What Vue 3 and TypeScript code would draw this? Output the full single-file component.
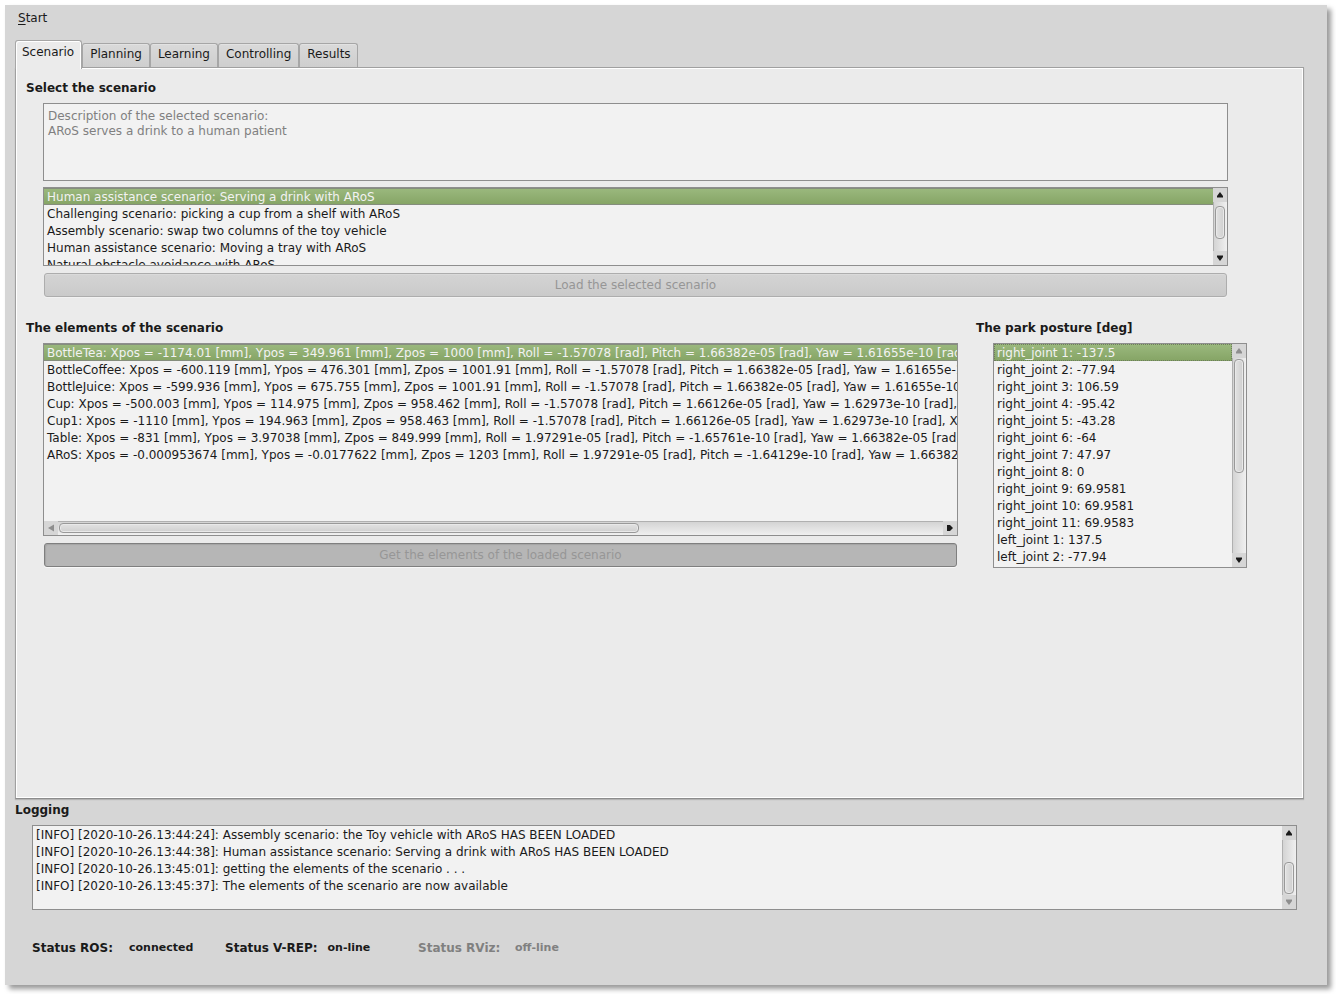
<script setup lang="ts">
import { ref } from 'vue'

type ListName = 'scenarios' | 'elements' | 'posture' | 'log'

const tabs = ['Scenario', 'Planning', 'Learning', 'Controlling', 'Results']
const activeTab = ref('Scenario')

const description = 'Description of the selected scenario:\nARoS serves a drink to a human patient'

const scenarios = [
  'Human assistance scenario: Serving a drink with ARoS',
  'Challenging scenario: picking a cup from a shelf with ARoS',
  'Assembly scenario: swap two columns of the toy vehicle',
  'Human assistance scenario: Moving a tray with ARoS',
  'Natural obstacle avoidance with ARoS',
]

const elements = [
  'BottleTea: Xpos = -1174.01 [mm], Ypos = 349.961 [mm], Zpos = 1000 [mm], Roll = -1.57078 [rad], Pitch = 1.66382e-05 [rad], Yaw = 1.61655e-10 [rad]',
  'BottleCoffee: Xpos = -600.119 [mm], Ypos = 476.301 [mm], Zpos = 1001.91 [mm], Roll = -1.57078 [rad], Pitch = 1.66382e-05 [rad], Yaw = 1.61655e-10 [rad]',
  'BottleJuice: Xpos = -599.936 [mm], Ypos = 675.755 [mm], Zpos = 1001.91 [mm], Roll = -1.57078 [rad], Pitch = 1.66382e-05 [rad], Yaw = 1.61655e-10 [rad]',
  'Cup: Xpos = -500.003 [mm], Ypos = 114.975 [mm], Zpos = 958.462 [mm], Roll = -1.57078 [rad], Pitch = 1.66126e-05 [rad], Yaw = 1.62973e-10 [rad],',
  'Cup1: Xpos = -1110 [mm], Ypos = 194.963 [mm], Zpos = 958.463 [mm], Roll = -1.57078 [rad], Pitch = 1.66126e-05 [rad], Yaw = 1.62973e-10 [rad], Xsize',
  'Table: Xpos = -831 [mm], Ypos = 3.97038 [mm], Zpos = 849.999 [mm], Roll = 1.97291e-05 [rad], Pitch = -1.65761e-10 [rad], Yaw = 1.66382e-05 [rad]',
  'ARoS: Xpos = -0.000953674 [mm], Ypos = -0.0177622 [mm], Zpos = 1203 [mm], Roll = 1.97291e-05 [rad], Pitch = -1.64129e-10 [rad], Yaw = 1.66382e-05',
]

const posture = [
  'right_joint 1: -137.5',
  'right_joint 2: -77.94',
  'right_joint 3: 106.59',
  'right_joint 4: -95.42',
  'right_joint 5: -43.28',
  'right_joint 6: -64',
  'right_joint 7: 47.97',
  'right_joint 8: 0',
  'right_joint 9: 69.9581',
  'right_joint 10: 69.9581',
  'right_joint 11: 69.9583',
  'left_joint 1: 137.5',
  'left_joint 2: -77.94',
]

const log = [
  '[INFO] [2020-10-26.13:44:24]: Assembly scenario: the Toy vehicle with ARoS HAS BEEN LOADED',
  '[INFO] [2020-10-26.13:44:38]: Human assistance scenario: Serving a drink with ARoS HAS BEEN LOADED',
  '[INFO] [2020-10-26.13:45:01]: getting the elements of the scenario . . .',
  '[INFO] [2020-10-26.13:45:37]: The elements of the scenario are now available',
]

const selected = ref({ scenarios: 0, elements: 0, posture: 0 })

const statuses = [
  { label: 'Status ROS:', value: 'connected', off: false },
  { label: 'Status V-REP:', value: 'on-line', off: false },
  { label: 'Status RViz:', value: 'off-line', off: true },
]

// Thumb start and length as percentages of the track.
const thumbs: Record<ListName, { start: number; size: number }> = {
  scenarios: { start: 8, size: 67 },
  elements: { start: 0, size: 65.5 },
  posture: { start: 0.5, size: 58.5 },
  log: { start: 40, size: 59 },
}

function vThumb(name: ListName) {
  return { top: thumbs[name].start + '%', height: thumbs[name].size + '%' }
}
function hThumb(name: ListName) {
  return { left: thumbs[name].start + '%', width: thumbs[name].size + '%' }
}

function scrollList(name: ListName, dx: number, dy: number) {
  document.getElementById(name + '-list')?.scrollBy(dx * 17, dy * 17)
}
</script>

<template>
  <main class="window">
    <nav class="menubar">
      <button type="button" class="menu-item"><u>S</u>tart</button>
    </nav>

    <div class="tabs" role="tablist">
      <button
        v-for="tab in tabs"
        :key="tab"
        type="button"
        role="tab"
        class="tab"
        :class="{ active: tab === activeTab }"
        :aria-selected="tab === activeTab"
        @click="activeTab = tab"
      >{{ tab }}</button>
    </div>

    <section class="panel" role="tabpanel">
      <template v-if="activeTab === 'Scenario'">
        <h2 class="title"><label for="description">Select the scenario</label></h2>
        <div class="scenario-group">
          <textarea id="description" class="description" disabled :value="description"></textarea>
          <div class="listbox scenario-box">
            <ul id="scenarios-list" class="rows" role="listbox" aria-label="Scenarios" tabindex="0">
              <li
                v-for="(row, i) in scenarios"
                :key="i"
                role="option"
                class="row"
                :class="{ selected: selected.scenarios === i }"
                :aria-selected="selected.scenarios === i"
                @click="selected.scenarios = i"
              >{{ row }}</li>
            </ul>
            <div class="vbar">
              <button type="button" class="arrow" aria-label="Scroll up" @click="scrollList('scenarios', 0, -1)">
                <svg width="8" height="6" viewBox="0 0 8 6"><path d="M4 0 7 4V5.500H1V4Z" /></svg>
              </button>
              <div class="track"><div class="thumb" :style="vThumb('scenarios')"></div></div>
              <button type="button" class="arrow" aria-label="Scroll down" @click="scrollList('scenarios', 0, 1)">
                <svg width="8" height="6" viewBox="0 0 8 6"><path d="M1 .5H7V2L4 6 1 2Z" /></svg>
              </button>
            </div>
          </div>
          <button type="button" class="action" disabled>Load the selected scenario</button>
        </div>

        <div class="columns">
          <section class="elements-group">
            <h2 class="title">The elements of the scenario</h2>
            <div class="listbox elements-box">
              <ul id="elements-list" class="rows" role="listbox" aria-label="Elements" tabindex="0">
                <li
                  v-for="(row, i) in elements"
                  :key="i"
                  role="option"
                  class="row"
                  :class="{ selected: selected.elements === i }"
                  :aria-selected="selected.elements === i"
                  @click="selected.elements = i"
                >{{ row }}</li>
              </ul>
              <div class="hbar">
                <button type="button" class="arrow" disabled aria-label="Scroll left">
                  <svg width="6" height="8" viewBox="0 0 6 8"><path d="M0 4 6 .5V7.500Z" /></svg>
                </button>
                <div class="track"><div class="thumb" :style="hThumb('elements')"></div></div>
                <button type="button" class="arrow" aria-label="Scroll right" @click="scrollList('elements', 1, 0)">
                  <svg width="6" height="8" viewBox="0 0 6 8"><path d="M6 4 3 1H0V7H3Z" /></svg>
                </button>
              </div>
            </div>
            <button type="button" class="action pressed" disabled>Get the elements of the loaded scenario</button>
          </section>

          <section class="posture-group">
            <h2 class="title">The park posture [deg]</h2>
            <div class="listbox posture-box">
              <ul id="posture-list" class="rows" role="listbox" aria-label="Park posture" tabindex="0">
                <li
                  v-for="(row, i) in posture"
                  :key="i"
                  role="option"
                  class="row current"
                  :class="{ selected: selected.posture === i }"
                  :aria-selected="selected.posture === i"
                  @click="selected.posture = i"
                >{{ row }}</li>
              </ul>
              <div class="vbar">
                <button type="button" class="arrow" disabled aria-label="Scroll up">
                  <svg width="8" height="6" viewBox="0 0 8 6"><path d="M4 0 7 4V5.500H1V4Z" /></svg>
                </button>
                <div class="track"><div class="thumb" :style="vThumb('posture')"></div></div>
                <button type="button" class="arrow" aria-label="Scroll down" @click="scrollList('posture', 0, 1)">
                  <svg width="8" height="6" viewBox="0 0 8 6"><path d="M1 .5H7V2L4 6 1 2Z" /></svg>
                </button>
              </div>
            </div>
          </section>
        </div>
      </template>
    </section>

    <section class="logging">
      <h2 class="title log-title">Logging</h2>
      <div class="listbox log-box">
        <ul id="log-list" class="rows" aria-label="Log">
          <li v-for="row in log" :key="row" class="row">{{ row }}</li>
        </ul>
        <div class="vbar">
          <button type="button" class="arrow" aria-label="Scroll up" @click="scrollList('log', 0, -1)">
            <svg width="8" height="6" viewBox="0 0 8 6"><path d="M4 0 7 4V5.500H1V4Z" /></svg>
          </button>
          <div class="track"><div class="thumb" :style="vThumb('log')"></div></div>
          <button type="button" class="arrow" disabled aria-label="Scroll down">
            <svg width="8" height="6" viewBox="0 0 8 6"><path d="M1 .5H7V2L4 6 1 2Z" /></svg>
          </button>
        </div>
      </div>
    </section>

    <dl class="statusbar">
      <div v-for="s in statuses" :key="s.label" class="status" :class="{ off: s.off }">
        <dt>{{ s.label }}</dt>
        <dd>{{ s.value }}</dd>
      </div>
    </dl>
  </main>
</template>

<style>
body {
  background: #fff;
}
#app {
  display: flex;
  min-height: 100vh;
  box-sizing: border-box;
  padding: 5px 9px 9px 5px;
}
</style>

<style scoped>
.window,
.window * {
  box-sizing: border-box;
}
.window {
  flex: 1;
  min-width: 0;
  display: flex;
  flex-direction: column;
  background: #d6d6d6;
  box-shadow: 4px 4px 5px rgba(0, 0, 0, 0.4);
  color: #1a1a1a;
  font-family: "DejaVu Sans", sans-serif;
  font-size: 12px;
  line-height: 16px;
}
button {
  font: inherit;
  color: inherit;
  margin: 0;
}
.menubar {
  padding: 5px 13px 14px;
  display: flex;
}
.menu-item {
  border: 0;
  padding: 0;
  background: none;
}
.menu-item u {
  text-underline-offset: 2px;
}
.tabs {
  display: flex;
  align-items: flex-end;
  height: 27px;
  padding-left: 10px;
  position: relative;
  z-index: 1;
}
.tab {
  height: 24px;
  padding: 0 7px 4px;
  border: 1px solid #a6a6a6;
  border-bottom: 0;
  border-radius: 3px 3px 0 0;
  background: linear-gradient(#dadada, #cecece);
  box-shadow: inset 0 1px #e2e2e2;
}
.tab:last-child {
  padding-right: 6px;
}
.tab.active {
  height: 29px;
  margin-bottom: -2px;
  padding: 0 7px 6px 6px;
  background: #ebebeb;
  box-shadow: inset 1px 1px #fff, inset -1px 0 #fff;
}
.panel {
  flex: 1;
  margin: 0 23px 0 10px;
  padding: 12px 9px 20px;
  border: 1px solid #a0a0a0;
  border-bottom-color: #8c8c8c;
  box-shadow: inset 0 0 0 1px #fff, 0 1px 1px #b4b4b4;
  background: #ebebeb;
}
.title {
  margin: 0 0 7px;
  padding-left: 1px;
  font-size: 12px;
  line-height: 16px;
  font-weight: bold;
}
.scenario-group {
  margin: 0 66px 0 18px;
  display: flex;
  flex-direction: column;
}
.description {
  height: 78px;
  margin: 0 0 6px;
  padding: 5px 4px;
  border: 1px solid #8e8e8e;
  border-radius: 0;
  resize: none;
  background: #f2f2f2;
  color: #808080;
  font: inherit;
  line-height: 15px;
}
.listbox {
  display: flex;
  border: 1px solid #8e8e8e;
  background: #f2f2f2;
}
.scenario-box {
  height: 79px;
}
.elements-box {
  flex-direction: column;
  height: 193px;
}
.posture-box {
  height: 225px;
}
.log-box {
  height: 85px;
}
.rows {
  flex: 1;
  min-width: 0;
  min-height: 0;
  margin: 0;
  padding: 0;
  list-style: none;
  overflow: hidden;
  outline: 0;
}
.row {
  height: 17px;
  line-height: 16px;
  padding: 1px 3px 0;
  white-space: nowrap;
}
.row.selected {
  color: #f2f2f2;
  background: linear-gradient(#9bb97e, #85a465);
  box-shadow: inset 0 1px #858d7d, inset 0 -1px #858d7d;
}
.row.current.selected {
  box-shadow: none;
  outline: 1px dotted #6d7d5c;
  outline-offset: -1px;
}
.vbar,
.hbar {
  display: flex;
  flex: none;
}
.vbar {
  width: 14px;
  flex-direction: column;
}
.hbar {
  height: 14px;
}
.arrow {
  flex: none;
  width: 14px;
  height: 14px;
  padding: 0;
  border: 0;
  background: #d6d6d6;
  display: flex;
  align-items: center;
  justify-content: center;
}
.arrow svg {
  fill: #1a1a1a;
}
.arrow:disabled svg {
  fill: #8e8e8e;
}
.track {
  flex: 1;
  position: relative;
}
.vbar .track {
  border-left: 1px solid #b0b0b0;
  background: linear-gradient(90deg, #d4d4d4, #f0f0f0);
}
.hbar .track {
  border-top: 1px solid #b0b0b0;
  background: linear-gradient(#d4d4d4, #f0f0f0);
}
.thumb {
  position: absolute;
  border: 1px solid #999;
  border-radius: 4px;
  box-shadow: inset 0 0 0 1px #e9e9e9;
}
.vbar .thumb {
  left: 1px;
  width: 10px;
  background: linear-gradient(90deg, #e2e2e2, #cfcfcf);
}
.hbar .thumb {
  top: 1px;
  height: 10px;
  margin-left: 1px;
  background: linear-gradient(#e2e2e2, #cfcfcf);
}
.action {
  display: block;
  height: 24px;
  margin: 7px 1px 0;
  padding: 0 8px;
  border: 1px solid #adadad;
  border-radius: 3px;
  background: linear-gradient(#d4d4d4, #cacaca);
  box-shadow: inset 0 1px #dadada, 0 1px #f2f2f2;
  color: #969696;
}
.action.pressed {
  border-color: #7f7f7f;
  background: #b6b6b6;
  box-shadow: inset 1px 1px 1px #a5a5a5, 0 1px #f8f8f8;
}
.columns {
  display: grid;
  grid-template-columns: minmax(0, 933fr) minmax(0, 272fr);
  column-gap: 17px;
  margin: 23px 47px 0 0;
}
.elements-group {
  display: flex;
  flex-direction: column;
}
.elements-group .listbox,
.posture-group .listbox {
  margin-left: 18px;
}
.elements-group .action {
  margin-left: 19px;
}
.logging {
  margin: 3px 30px 0 10px;
}
.log-title {
  padding: 0;
}
.log-box {
  margin-left: 17px;
}
.statusbar {
  display: flex;
  margin: 30px 27px 29px;
  font-weight: bold;
}
.status {
  display: flex;
  min-width: 193px;
}
.status dt {
  min-width: 97px;
  padding-right: 10px;
}
.status dd {
  margin: 0;
  font-size: 11px;
}
.status.off {
  color: #808080;
}
</style>
